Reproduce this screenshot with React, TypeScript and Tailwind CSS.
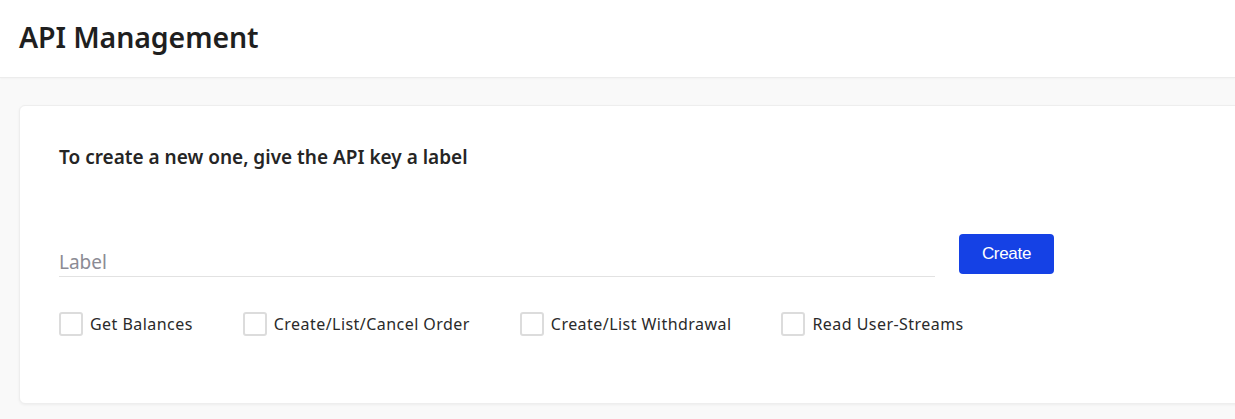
import React from "react";

const perms = [
  "Get Balances",
  "Create/List/Cancel Order",
  "Create/List Withdrawal",
  "Read User-Streams",
];

export default function App() {
  return (
    <div
      className="w-[1235px] h-[419px] overflow-hidden bg-[#f9f9f9] text-[#222]"
      style={{ fontFamily: '"Noto Sans", "Open Sans", sans-serif' }}
    >
      <header className="h-[78px] bg-white border-b border-[#ececec] shadow-[0_1px_2px_rgba(0,0,0,0.03)] flex items-center px-[19px]">
        <h1 className="text-[28.5px] font-semibold tracking-[-0.1px] text-[#1f1f1f] leading-none pb-[3px]">
          API Management
        </h1>
      </header>
      <main className="pt-[27px] pl-[19px]">
        <section className="w-[1260px] h-[299px] bg-white rounded-[6px] border border-[#eeeeee] shadow-[0_1px_3px_rgba(0,0,0,0.05)] pl-[39px] pt-[39px]">
          <p className="text-[19px] font-semibold leading-[24px] text-[#252525]">
            To create a new one, give the API key a label
          </p>
          <div className="flex items-start mt-[65px]">
            <div className="w-[876px] h-[43px] border-b border-[#e2e2e2] flex items-end pb-[2px]">
              <input
                placeholder="Label"
                className="w-full bg-transparent outline-none text-[19px] leading-[24px] text-[#222] placeholder:text-[#8b8b94]"
              />
            </div>
            <button
              className="ml-[24px] w-[95px] h-[40px] rounded-[4px] bg-[#1541e5] text-white text-[17px] tracking-[-0.3px]"
              style={{ fontFamily: '"Liberation Sans", Arial, sans-serif' }}
            >
              Create
            </button>
          </div>
          <div className="flex items-center gap-[50px] mt-[35px]">
            {perms.map((p) => (
              <label key={p} className="flex items-center gap-[7px] cursor-pointer">
                <span className="w-[24px] h-[24px] rounded-[3px] border-2 border-[#dcdcdc] bg-white" />
                <span className="text-[16px] tracking-[0.45px] text-[#2a2a2a] leading-[24px]">{p}</span>
              </label>
            ))}
          </div>
        </section>
      </main>
    </div>
  );
}
